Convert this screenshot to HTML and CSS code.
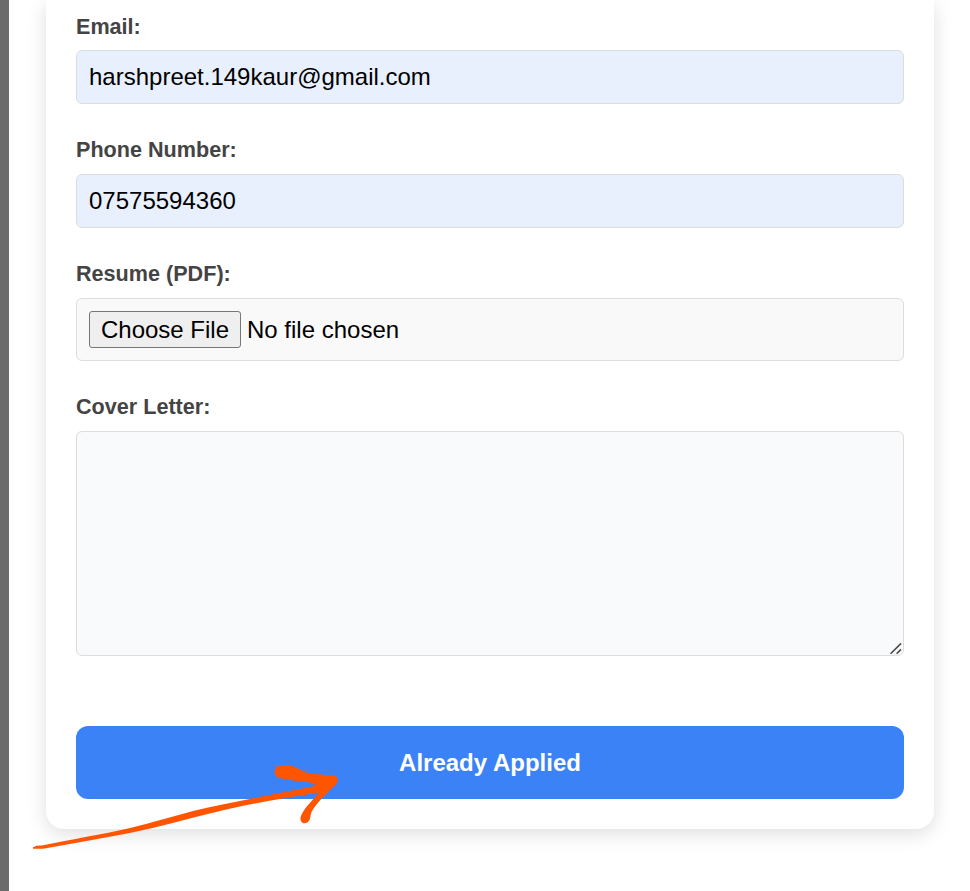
FILE: index.html
```
<!DOCTYPE html>
<html lang="en">
<head>
<meta charset="utf-8">
<title>Job Application</title>
<link rel="stylesheet" href="styles.css">
</head>
<body>
<main class="page">
  <form class="card">
    <div class="group">
      <label for="email">Email:</label>
      <input class="field" id="email" type="text" value="harshpreet.149kaur@gmail.com">
    </div>
    <div class="group">
      <label for="phone">Phone Number:</label>
      <input class="field" id="phone" type="text" value="07575594360">
    </div>
    <div class="group">
      <label>Resume (PDF):</label>
      <div class="field file">
        <button class="choose" type="button">Choose File</button>
        <span>No file chosen</span>
      </div>
    </div>
    <div class="group">
      <label for="cover">Cover Letter:</label>
      <div class="cover">
        <textarea class="field letter" id="cover"></textarea>
        <svg class="grip" width="12" height="12" viewBox="0 0 12 12"><path d="M.6 10.800L11 .4M6.600 10.800L11 6.400"/></svg>
      </div>
    </div>
    <button class="submit" type="button">Already Applied</button>
  </form>
</main>
<svg class="arrow" width="320" height="100" viewBox="30 755 320 100">
  <path d="M33 847.300L36.500 845.800L42 845.500C72 839.500 102 834.300 129 828.300C152 822.500 173 816.500 193 811C232 801.500 278 794 317 785.500Q312 783 307 781.800C298 781.300 289 780 280 778.300C272.500 776 273 766.500 281 765.300Q287 764.700 292 766C299 768 303 771.500 309 773.700L332 775.300C339.500 776.500 339 781.500 335.500 785C327 793 317 802 311.500 812C310 816 310.500 818 309.500 820Q307.500 823.600 303.500 823.300Q300 822 300.500 817.500C303 809 312 801 319 792.500C281 798.500 248 804 215 812.200C188 818.500 160 827 131 832.800C103 838.200 73 843.500 43 848.800L33 848.800Z"/>
</svg>
</body>
</html>
```
FILE: styles.css
```
* {
  box-sizing: border-box;
}

body {
  margin: 0;
  height: 891px;
  overflow: hidden;
  background: #fff;
  font-family: "Liberation Sans", Arial, sans-serif;
}

.page {
  height: 891px;
  border-left: 9px solid #6b6b6b;
  padding: 0 36px 0 37px;
}

.card {
  height: 829px;
  padding: 13px 30px 30px;
  background: #fff;
  border-radius: 0 0 18px 18px;
  box-shadow: 0 5px 19px rgba(0, 0, 0, 0.13);
}

.group {
  margin-bottom: 32px;
}

label {
  display: block;
  height: 28px;
  margin-bottom: 10px;
  line-height: 28px;
  font-size: 21.6px;
  font-weight: 700;
  color: #444;
}

.group:first-child label {
  margin-bottom: 9px;
}

.field {
  display: block;
  width: 100%;
  height: 54px;
  margin-top: 0;
  padding: 0 12px;
  border: 1px solid #ddd;
  border-radius: 6px;
  background: #e8f0fe;
  color: #000;
  font: 24px "Liberation Sans", Arial, sans-serif;
}

.file {
  display: flex;
  align-items: center;
  gap: 6px;
  height: 63px;
  background: #f9f9f9;
}

.choose {
  width: 152px;
  height: 37px;
  padding: 0;
  border: 1px solid #767676;
  border-radius: 3px;
  background: #efefef;
  color: #000;
  font: inherit;
}

.cover {
  position: relative;
}

.letter {
  height: 225px;
  resize: none;
  background: #f9fafc;
}

.grip {
  position: absolute;
  right: 2px;
  bottom: 1px;
  fill: none;
  stroke: #4a4a4a;
  stroke-width: 1.6;
}

.submit {
  display: block;
  width: 100%;
  height: 73px;
  margin-top: 70px;
  padding: 0;
  border: 0;
  border-radius: 12px;
  background: #3b82f6;
  color: #fff;
  font: 700 24px "Liberation Sans", Arial, sans-serif;
}

.arrow {
  position: absolute;
  left: 30px;
  top: 755px;
  fill: #ff5500;
}
```
